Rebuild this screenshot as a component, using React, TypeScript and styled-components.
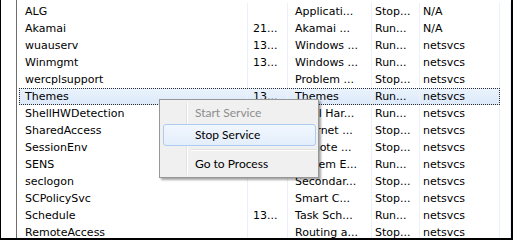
import React from "react";
import styled, { createGlobalStyle } from "styled-components";

const Global = createGlobalStyle`
  html, body { margin: 0; padding: 0; background: #fff; }
  body { width: 513px; height: 240px; overflow: hidden; }
`;

const Frame = styled.div`
  position: relative;
  box-sizing: border-box;
  width: 513px;
  height: 240px;
  display: flex;
  background: #fff;
  border-left: 1px solid #000;
  border-right: 2px solid #000;
  border-bottom: 2px solid #000;
  overflow: hidden;
`;

const Gutter = styled.div`
  width: 15px;
  flex: none;
  border-right: 1px solid #6d6d6d;
`;

const List = styled.div`
  flex: 1;
  padding-top: 3px;
  display: flex;
  flex-direction: column;
  font-family: Tahoma, "DejaVu Sans", sans-serif;
  font-size: 11px;
  color: #000;
`;

const Row = styled.div<{ $selected?: boolean }>`
  position: relative;
  display: grid;
  grid-template-columns: 231px 40px 84px 48px 80px 1fr;
  height: 17px;
  line-height: 17px;
  flex: none;
  background: ${(p) =>
    p.$selected
      ? "linear-gradient(#eaf3fd, #dce9f9) 2px 0 / 481px 100% no-repeat"
      : "transparent"};
  &::after {
    content: "";
    display: ${(p) => (p.$selected ? "block" : "none")};
    position: absolute;
    top: 0;
    bottom: 0;
    left: 2px;
    width: 481px;
    box-sizing: border-box;
    border: 1px dotted #2c2c2c;
    pointer-events: none;
  }
`;

const Cell = styled.div<{ $pad?: number }>`
  padding-left: ${(p) => p.$pad ?? 4}px;
  border-right: 1px solid #eaf1f9;
  white-space: nowrap;
  overflow: hidden;
`;

const Menu = styled.div`
  position: absolute;
  left: 158px;
  top: 99px;
  width: 160px;
  box-sizing: border-box;
  padding: 2px;
  background: #f0f0f0;
  border: 1px solid #979797;
  box-shadow: 2px 2px 2px rgba(0, 0, 0, 0.35);
  font-family: "Segoe UI", Lato, "Open Sans", sans-serif;
  font-size: 12px;
  &::before {
    content: "";
    position: absolute;
    top: 2px;
    bottom: 2px;
    left: 26px;
    width: 1px;
    background: #e2e3e3;
    box-shadow: 1px 0 0 #fff;
  }
`;

const Item = styled.div<{ $disabled?: boolean; $active?: boolean }>`
  position: relative;
  height: 22px;
  line-height: 20px;
  box-sizing: border-box;
  margin-left: 1px;
  padding-left: 31px;
  color: ${(p) => (p.$disabled ? "#8d8d8d" : "#000")};
  border: 1px solid ${(p) => (p.$active ? "#aeccf1" : "transparent")};
  border-radius: 3px;
  background: ${(p) =>
    p.$active ? "linear-gradient(#f1f7fe, #e3eefb)" : "transparent"};
  z-index: 1;
`;

const Separator = styled.div`
  height: 7px;
  display: flex;
  align-items: center;
  padding-left: 29px;
  &::after {
    content: "";
    flex: 1;
    height: 1px;
    background: #e0e0e0;
    box-shadow: 0 1px 0 #fff;
  }
`;

type Svc = [string, string, string, string, string];

const rows: Svc[] = [
  ["ALG", "", "Applicati...", "Stop...", "N/A"],
  ["Akamai", "21...", "Akamai ...", "Run...", "N/A"],
  ["wuauserv", "13...", "Windows ...", "Run...", "netsvcs"],
  ["Winmgmt", "13...", "Windows ...", "Run...", "netsvcs"],
  ["wercplsupport", "", "Problem ...", "Stop...", "netsvcs"],
  ["Themes", "13...", "Themes", "Run...", "netsvcs"],
  ["ShellHWDetection", "13...", "Shell Har...", "Run...", "netsvcs"],
  ["SharedAccess", "", "Internet ...", "Stop...", "netsvcs"],
  ["SessionEnv", "", "Remote ...", "Stop...", "netsvcs"],
  ["SENS", "13...", "System E...", "Run...", "netsvcs"],
  ["seclogon", "", "Secondar...", "Stop...", "netsvcs"],
  ["SCPolicySvc", "", "Smart C...", "Stop...", "netsvcs"],
  ["Schedule", "13...", "Task Sch...", "Run...", "netsvcs"],
  ["RemoteAccess", "", "Routing a...", "Stop...", "netsvcs"],
];

export default function App() {
  return (
    <>
      <Global />
      <Frame>
        <Gutter />
        <List>
          {rows.map((r) => (
            <Row key={r[0]} $selected={r[0] === "Themes"}>
              <Cell $pad={8}>{r[0]}</Cell>
              <Cell $pad={5}>{r[1]}</Cell>
              <Cell $pad={7}>{r[2]}</Cell>
              <Cell $pad={3}>{r[3]}</Cell>
              <Cell $pad={3}>{r[4]}</Cell>
              <Cell />
            </Row>
          ))}
        </List>
        <Menu>
          <Item $disabled>Start Service</Item>
          <Item $active>Stop Service</Item>
          <Separator />
          <Item>Go to Process</Item>
        </Menu>
      </Frame>
    </>
  );
}
